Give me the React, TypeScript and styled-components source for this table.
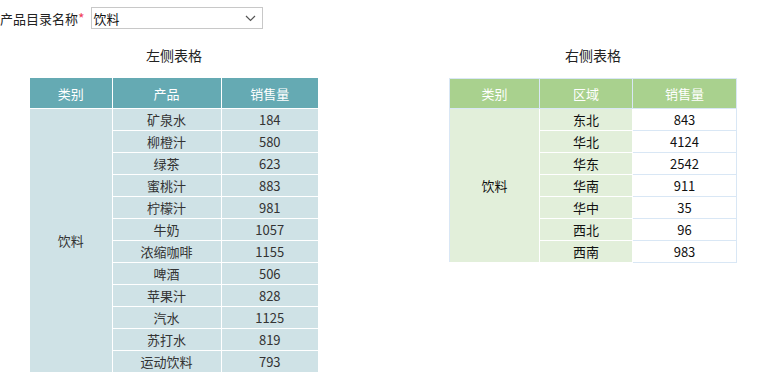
import React from "react";
import styled, { createGlobalStyle } from "styled-components";

const GlobalStyle = createGlobalStyle`
  body {
    margin: 0;
    background: #fff;
    font-family: "Microsoft YaHei", "Noto Sans CJK SC", sans-serif;
    font-size: 13px;
    color: #333;
  }
`;

const leftRows = [
  ["矿泉水", 184],
  ["柳橙汁", 580],
  ["绿茶", 623],
  ["蜜桃汁", 883],
  ["柠檬汁", 981],
  ["牛奶", 1057],
  ["浓缩咖啡", 1155],
  ["啤酒", 506],
  ["苹果汁", 828],
  ["汽水", 1125],
  ["苏打水", 819],
  ["运动饮料", 793],
];

const rightRows = [
  ["东北", 843],
  ["华北", 4124],
  ["华东", 2542],
  ["华南", 911],
  ["华中", 35],
  ["西北", 96],
  ["西南", 983],
];

function App() {
  return (
    <>
      <GlobalStyle />
      <TopBar>
        <Label>
          产品目录名称<Star>*</Star>
        </Label>
        <Select>
          <span>饮料</span>
          <svg width="11" height="7" viewBox="0 0 11 7">
            <path d="M1 1 L5.5 5.5 L10 1" fill="none" stroke="#555" strokeWidth="1.2" />
          </svg>
        </Select>
      </TopBar>
      <Panels>
        <Panel>
          <Title>左侧表格</Title>
          <Table $variant="left">
            <colgroup>
              <col style={{ width: 82 }} />
              <col style={{ width: 109 }} />
              <col style={{ width: 97 }} />
            </colgroup>
            <thead>
              <tr>
                <Th $variant="left">类别</Th>
                <Th $variant="left">产品</Th>
                <Th $variant="left">销售量</Th>
              </tr>
            </thead>
            <tbody>
              {leftRows.map(([name, qty], i) => (
                <tr key={name as string}>
                  {i === 0 && (
                    <Td $variant="left" rowSpan={leftRows.length}>
                      饮料
                    </Td>
                  )}
                  <Td $variant="left">{name}</Td>
                  <Td $variant="left">{qty}</Td>
                </tr>
              ))}
            </tbody>
          </Table>
        </Panel>
        <Panel>
          <Title>右侧表格</Title>
          <Table $variant="right">
            <colgroup>
              <col style={{ width: 90 }} />
              <col style={{ width: 93 }} />
              <col style={{ width: 104 }} />
            </colgroup>
            <thead>
              <tr>
                <Th $variant="right">类别</Th>
                <Th $variant="right">区域</Th>
                <Th $variant="right">销售量</Th>
              </tr>
            </thead>
            <tbody>
              {rightRows.map(([name, qty], i) => (
                <tr key={name as string}>
                  {i === 0 && (
                    <Td $variant="right" rowSpan={rightRows.length}>
                      饮料
                    </Td>
                  )}
                  <Td $variant="right">{name}</Td>
                  <Td $variant="right" $plain>
                    {qty}
                  </Td>
                </tr>
              ))}
            </tbody>
          </Table>
        </Panel>
      </Panels>
    </>
  );
}

export default App;

type Variant = "left" | "right";

const TopBar = styled.div`
  display: flex;
  align-items: center;
  padding-top: 7px;
  height: 22px;
`;

const Label = styled.span`
  color: #222;
  font-size: 13px;
  margin-right: 6px;
`;

const Star = styled.span`
  color: #f0405a;
  font-size: 14px;
`;

const Select = styled.div`
  box-sizing: border-box;
  width: 172px;
  height: 22px;
  border: 1px solid #c8c8c8;
  display: flex;
  align-items: center;
  justify-content: space-between;
  padding: 0 6px 0 2px;
  color: #111;
  font-size: 13px;
`;

const Panels = styled.div`
  display: flex;
  align-items: flex-start;
  padding-left: 30px;
  gap: 131px;
`;

const Panel = styled.div`
  display: flex;
  flex-direction: column;
  align-items: center;
`;

const Title = styled.div`
  margin-top: 16px;
  margin-bottom: 13px;
  line-height: 20px;
  font-size: 14px;
  color: #222;
`;

const Table = styled.table<{ $variant: Variant }>`
  border-collapse: collapse;
  table-layout: fixed;
  width: ${(p) => (p.$variant === "left" ? 288 : 287)}px;
  border: ${(p) => (p.$variant === "left" ? "none" : "1px solid #d9e7f5")};
`;

const Th = styled.th<{ $variant: Variant }>`
  height: ${(p) => (p.$variant === "left" ? 30 : 29)}px;
  padding: 0;
  font-weight: normal;
  font-size: 13px;
  color: #fff;
  background: ${(p) => (p.$variant === "left" ? "#65aab3" : "#a9d18e")};
  border: 1px solid ${(p) => (p.$variant === "left" ? "#fff" : "#d9e7f5")};
  border-top: ${(p) => (p.$variant === "left" ? "none" : "1px solid #d9e7f5")};
  &:first-child {
    border-left: ${(p) => (p.$variant === "left" ? "none" : "1px solid #d9e7f5")};
  }
  &:last-child {
    border-right: ${(p) => (p.$variant === "left" ? "none" : "1px solid #d9e7f5")};
  }
`;

const Td = styled.td<{ $variant: Variant; $plain?: boolean }>`
  height: 21px;
  padding: 0;
  text-align: center;
  font-size: 13px;
  color: ${(p) => (p.$variant === "left" ? "#333" : "#111")};
  background: ${(p) =>
    p.$plain ? "#fff" : p.$variant === "left" ? "#cfe2e6" : "#e2efda"};
  border: 1px solid ${(p) => (p.$variant === "left" || !p.$plain ? "#fff" : "#d9e7f5")};
  &:first-child {
    border-left: ${(p) => (p.$variant === "left" ? "none" : "1px solid #d9e7f5")};
  }
  &:last-child {
    border-right: ${(p) => (p.$variant === "left" ? "none" : "1px solid #d9e7f5")};
  }
`;
